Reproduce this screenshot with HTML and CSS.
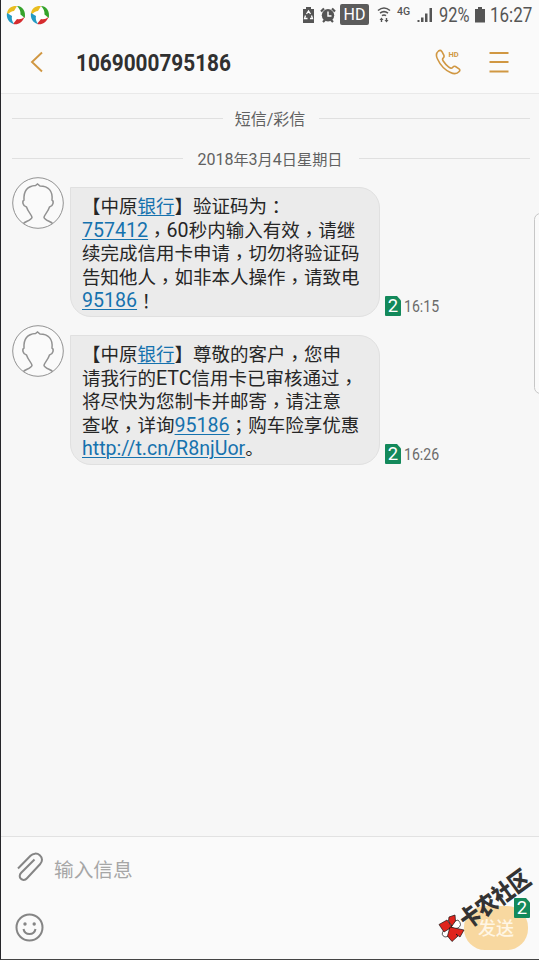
FILE: index.html
```
<!DOCTYPE html>
<html lang="zh-CN">
<head>
<meta charset="utf-8">
<title>1069000795186</title>
<link rel="stylesheet" href="styles.css">
</head>
<body>
<svg class="defs" width="0" height="0" aria-hidden="true">
  <symbol id="swirl" viewBox="0 0 20 20">
    <circle cx="10" cy="10" r="6.6" fill="#fff"/>
    <path d="M1 8C2 3 6 .5 11 1L8 6Q5 6 1 10Z" fill="#e9bd20"/>
    <path d="M11 1C17 1 20 7 18.800 13L14.500 9.500Q15 5 11 1Z" fill="#35a32b"/>
    <path d="M18.500 12C16 18 12 20 7 19L11 14Q15 15 18.500 12Z" fill="#d52b2e"/>
    <path d="M8 19C3 18 0 13 1 8L6 11Q5 15 8 19Z" fill="#239bc4"/>
  </symbol>
  <symbol id="avatar" viewBox="0 0 52 52">
    <circle cx="26" cy="26" r="25.300" fill="#fafafa" stroke="#929292" stroke-width="1"/>
    <path d="M11.500 46.500C13 44.500 19 43.500 20 40.500C20.300 38.500 16 35 14.500 30C10.500 29 10 24 12 23C11.500 14 15.500 9 23.500 8.500L25.500 7L28 9C36.500 9 41 14 40 23C42 24 41.500 29 37.500 30C36 35 31.700 38.500 32 40.500C33 43.500 39 44.500 40.500 46.500" fill="none" stroke="#929292" stroke-width="1.500"/>
  </symbol>
</svg>
<main class="phone">
  <header class="top">
    <div class="status">
      <svg class="swirl" width="20" height="20"><use href="#swirl"/></svg>
      <svg class="swirl" width="20" height="20"><use href="#swirl"/></svg>
      <span class="grow"></span>
      <svg class="recycle" width="11" height="16" viewBox="0 0 11 16"><path d="M3 2V0h5v2h3v14H0V2z" fill="#555"/><path d="M3.500 7l2-3 2 3M8.500 8.500l1 3H7M4.500 11.500h-3l1-3" fill="none" stroke="#fff" stroke-width="1.300"/></svg>
      <svg class="alarm" width="16" height="16" viewBox="0 0 16 16"><circle cx="8" cy="8.300" r="6.200" fill="#555"/><path d="M1 4.500L4 1.500M15 4.500L12 1.500M3 15l2-2M13 15l-2-2" stroke="#555" stroke-width="2.200"/><path d="M8 4.500V9h3.500" fill="none" stroke="#fff" stroke-width="1.400"/></svg>
      <span class="hd">HD</span>
      <svg class="wifi" width="14" height="17" viewBox="0 0 14 17"><path d="M1 4.500Q7-.5 13 4.500M3 7.200Q7 4 11 7.200M5 9.700Q7 8.200 9 9.700" fill="none" stroke="#555" stroke-width="1.600"/><path d="M4.500 11.500L2.500 14h1.300v2h1.400v-2h1.300zM9.500 16.500l2-2.500h-1.300v-2H8.800v2H7.500z" fill="#555"/></svg>
      <span class="net">4G</span>
      <svg class="signal" width="16" height="16" viewBox="0 0 16 16"><path d="M.5 13h2v2h-2zM4 10.500h2.500V15H4zM8 6.500h2.500V15H8zM12.500 1H15v14h-2.500z" fill="#555"/></svg>
      <span class="pct">92%</span>
      <svg class="battery" width="10" height="16" viewBox="0 0 10 16"><path d="M3 2V0h4v2h3v13.500H0V2z" fill="#555"/></svg>
      <span class="clock">16:27</span>
    </div>
    <div class="title">
      <svg class="back" width="14" height="22" viewBox="0 0 14 22"><path d="M12 1.500L2 11l10 9.500" fill="none" stroke="#d09742" stroke-width="1.900"/></svg>
      <h1>1069000795186</h1>
      <svg class="call" width="27" height="27" viewBox="0 0 27 27"><path d="M3.500 2C1 4 1 7 2.500 10C5 15.500 10 21 15.500 23.500C19 25.200 22 25 24.200 22.500Q25.500 21 24 19.800L20.500 17.500Q19 16.800 17.800 18.200C16.500 19.800 15.300 19.300 13.500 17.800Q10.500 15.500 8.200 12C7.200 10.500 7.200 9.700 8.300 8.800Q9.500 7.800 8.800 6L6.800 2.400Q5.500.7 3.500 2Z" fill="none" stroke="#d09742" stroke-width="1.600"/><text x="13.500" y="7.500" class="calltag">HD</text></svg>
      <svg class="menu" width="20" height="22" viewBox="0 0 20 22"><path d="M.5 2h19M.5 11h19M.5 20.500h19" stroke="#d09742" stroke-width="1.900"/></svg>
    </div>
  </header>

  <section class="thread">
    <div class="rule kind"><span>短信/彩信</span></div>
    <div class="rule date"><span><b>2018</b>年<b>3</b>月<b>4</b>日星期日</span></div>

    <article class="msg">
      <svg class="avatar" width="52" height="52"><use href="#avatar"/></svg>
      <div class="bubble">
        <p>【中原<a>银行</a>】验证码为<i class="mid">：</i></p>
        <p><a class="n">757412</a><i>，</i><b>60</b>秒内输入有效<i>，</i>请继</p>
        <p>续完成信用卡申请<i>，</i>切勿将验证码</p>
        <p>告知他人<i>，</i>如非本人操作<i>，</i>请致电</p>
        <p><a class="n">95186</a><i class="mid">！</i></p>
      </div>
      <div class="meta"><span class="sim">2</span><time>16:15</time></div>
    </article>

    <article class="msg">
      <svg class="avatar" width="52" height="52"><use href="#avatar"/></svg>
      <div class="bubble">
        <p>【中原<a>银行</a>】尊敬的客户<i>，</i>您申</p>
        <p>请我行的<b>ETC</b>信用卡已审核通过<i>，</i></p>
        <p>将尽快为您制卡并邮寄<i>，</i>请注意</p>
        <p>查收<i>，</i>详询<a class="n">95186</a><i class="mid">；</i>购车险享优惠</p>
        <p><a class="n">http://t.cn/R8njUor</a>。</p>
      </div>
      <div class="meta"><span class="sim">2</span><time>16:26</time></div>
    </article>
    <div class="edge"></div>
  </section>

  <footer class="composer">
    <div class="row input">
      <svg width="28" height="30" viewBox="0 0 28 30"><path d="M2 16.500L14.500 3.800C17 1.200 21 .8 23.800 3.300C26.800 6 26.600 9.500 24 12.300L11 26.200C9 28.400 6.500 28.300 4.900 26.800C3.200 25.200 3.300 22.800 5.200 20.800L18.500 7.500" fill="none" stroke="#858585" stroke-width="2"/></svg>
      <span>输入信息</span>
    </div>
    <div class="row actions">
      <svg width="29" height="29" viewBox="0 0 29 29"><circle cx="14.500" cy="14.500" r="13" fill="none" stroke="#858585" stroke-width="2"/><circle cx="10" cy="11" r="1.700" fill="#858585"/><circle cx="19.200" cy="11" r="1.700" fill="#858585"/><path d="M8.500 16Q9.500 21 14.500 21Q19.500 21 20.500 16" fill="none" stroke="#858585" stroke-width="2"/></svg>
      <div class="send">发送<span class="sim">2</span></div>
    </div>
    <div class="mark">卡农社区</div>
    <svg class="logo" width="27" height="28" viewBox="0 0 27 28"><g stroke="#161616" stroke-width=".7" stroke-linejoin="round"><path d="M13 13Q15 7 20 6Q25 11 20 14Q17 16 13 13z" fill="#fff"/><path d="M12 14Q14 23 7 23Q2 21 6 16z" fill="#fff"/><path d="M14 12L10.500 7 11 3 17 1 17.500 7z" fill="#df241c"/><path d="M14 13L6 18 1 10.500 9 6z" fill="#df241c"/><path d="M12 13L26 16 22 23 18 20 20 22 14 27.500 9.500 22z" fill="#df241c"/></g></svg>
  </footer>
</main>
</body>
</html>
```
FILE: styles.css
```
* { box-sizing: border-box; }
body { margin: 0; background: #f7f7f7; font-family: Roboto, "Noto Sans CJK SC", sans-serif; color: #262626; }
.defs { position: absolute; }
svg { display: block; flex: none; }
.phone { width: 539px; height: 960px; display: flex; flex-direction: column; overflow: hidden; border-left: 1px solid #26262a; border-bottom: 1px solid #444; }

.top { height: 94px; flex: none; background: #fafafa; border-bottom: 1px solid #e9e9e9; }
.status { height: 29px; display: flex; align-items: center; padding: 0 6px 0 5px; color: #555; white-space: nowrap; }
.swirl { margin-right: 4px; }
.grow { flex: 1; }
.recycle { margin-right: 6px; }
.alarm { margin-right: 4px; }
.hd { width: 29px; height: 21px; border-radius: 2px; background: #5b5b5b; color: #fff; font: 16px/21px Roboto, sans-serif; text-align: center; margin-right: 8px; }
.wifi { margin-right: 6px; }
.net { width: 14px; font-size: 10.500px; font-weight: 500; margin: -7px 6px 0 0; }
.signal { margin-right: 6px; }
.pct, .clock { font-size: 20px; line-height: 29px; transform-origin: 0 50%; margin-top: 2px; }
.pct { width: 31px; transform: scaleX(.82); margin-right: 5px; }
.battery { margin-right: 5px; }
.clock { width: 43px; transform: scaleX(.85); }
.title { height: 64px; display: flex; align-items: center; padding: 3px 30px 0 29px; }
.title h1 { flex: 1; margin: 3px 0 0 32px; font: 700 23px/30px Roboto, sans-serif; color: #303030; transform: scaleX(.903); transform-origin: 0 50%; white-space: nowrap; }
.back { margin-top: -1px; }
.call { margin: -1px 27px 0 0; }
.menu { margin-top: -1px; }
.calltag { font: 700 7.500px Roboto, sans-serif; fill: #d09742; }

.thread { position: relative; flex: 1; }
.rule { display: flex; align-items: center; gap: 12px; padding: 0 9px 0 11px; color: #616161; font-size: 15.300px; line-height: 24px; white-space: nowrap; }
.rule::before, .rule::after { content: ""; flex: 1; height: 1px; background: #e0e0e0; }
.rule span { padding-top: 2px; margin-bottom: -2px; margin-right: 2px; }
.rule b { font-weight: 400; font-size: 16px; }
.kind { margin-top: 12px; font-size: 16px; }
.date { margin-top: 16px; gap: 14px; }
.date span { font-size: 15.200px; }

.msg { display: flex; align-items: flex-end; padding-left: 11px; height: 130px; }
.msg + .msg { margin-top: 18px; }
.date + .msg { margin-top: 17px; }
.avatar { align-self: flex-start; margin-top: -10px; }
.bubble { width: 310px; height: 130px; margin-left: 6px; padding: 6px 0 0 11px; background: #ebebeb; border: 1px solid #e0e0e0; border-radius: 0 21px 21px 21px; }
.bubble p { margin: 0; height: 23.600px; line-height: 23.600px; font-family: "Noto Sans CJK SC", sans-serif; font-size: 18.500px; white-space: nowrap; }
.bubble b, .bubble .n { font: 400 19.600px/20px Roboto, sans-serif; }
.bubble i { display: inline-block; height: 20px; line-height: 20px; font-style: normal; font-family: "Noto Sans CJK TC", sans-serif; transform: translateY(4px); }
.bubble .mid { transform: translateY(1px); }
.bubble a { color: #1672ae; text-decoration: underline; text-decoration-thickness: 1px; text-underline-offset: 2px; }
.meta { display: flex; align-items: center; gap: 3px; margin-left: 5px; }
.sim { display: block; width: 16px; height: 20px; background: #13895b; color: #fff; font: 18.500px/21px Roboto, sans-serif; text-align: center; border-radius: 1px; clip-path: polygon(0 0, 75% 0, 100% 22%, 100% 100%, 0 100%); }
.meta time { font-size: 16px; line-height: 20px; color: #6b6b6b; transform: scaleX(.88); transform-origin: 0 50%; margin-top: 2px; }
.edge { position: absolute; right: -8px; top: 119px; width: 13px; height: 181px; background: #fafafa; border: 1px solid #c7c7c7; border-radius: 8px; }

.composer { position: relative; flex: none; height: 123px; background: #fafafa; border-top: 1px solid #e2e2e2; }
.row { display: flex; align-items: center; }
.input { height: 62px; padding: 2px 0 0 15px; gap: 10px; color: #a6a6a6; font-size: 19.700px; line-height: 30px; }
.input svg { margin-top: -4px; }
.input span { margin-top: 3px; }
.actions { height: 60px; padding: 0 11px 0 14px; justify-content: space-between; align-items: flex-start; }
.actions > svg { margin-top: 14px; }
.send { position: relative; width: 64px; height: 44px; margin-top: 7px; border-radius: 21px; background: #f8d8a0; color: #fff6e5; font: 500 18px/43px "Noto Sans CJK SC", sans-serif; text-align: center; }
.send .sim { position: absolute; right: -2px; top: -8px; }
.mark { position: absolute; left: 445px; top: 46px; width: 96px; font: 900 24px/30px "Noto Sans CJK SC", sans-serif; color: #333; white-space: nowrap; transform: rotate(-36deg) scaleX(.84); }
.logo { position: absolute; left: 437px; top: 77px; }
```
